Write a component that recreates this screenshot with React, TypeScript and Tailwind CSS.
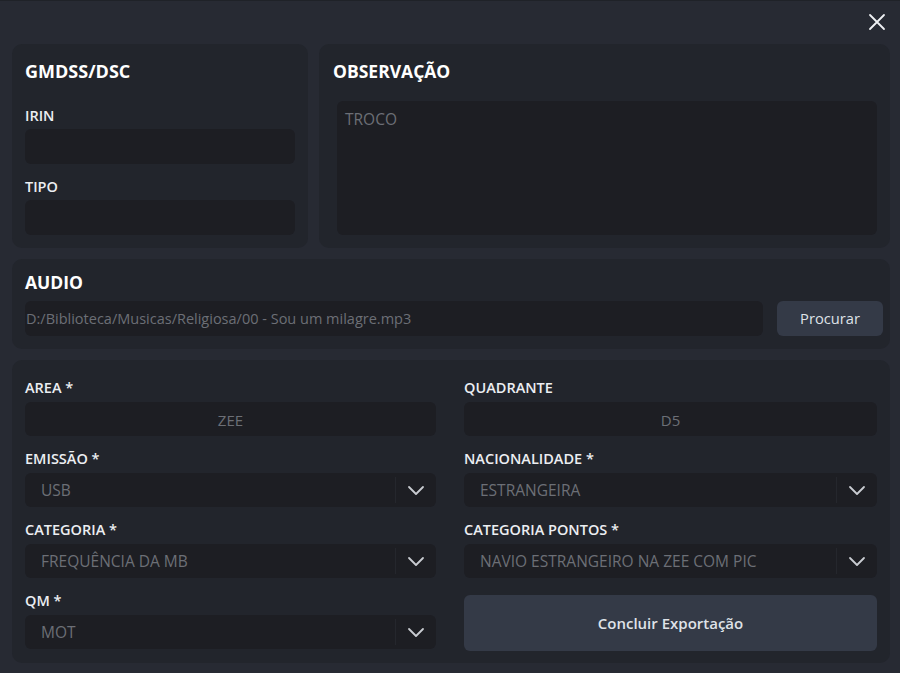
import React from "react";

const font = { fontFamily: '"Open Sans", "Noto Sans", sans-serif' };

function Chevron() {
  return (
    <svg width="20" height="20" viewBox="0 0 20 20" fill="none">
      <path d="M3 7 L10 14 L17 7" stroke="#c9ccd2" strokeWidth="1.8" strokeLinecap="round" strokeLinejoin="round" />
    </svg>
  );
}

function Label({ children }: { children: React.ReactNode }) {
  return <div className="h-5 text-[14.5px] leading-5 font-semibold text-[#eceef2]">{children}</div>;
}

function Select({ value }: { value: string }) {
  return (
    <div className="mt-1 h-[34px] rounded-md bg-[#1d1e23] flex items-center">
      <div className="flex-1 pl-4 pt-[2px] text-[15.5px] text-[#6c6f76] truncate">{value}</div>
      <div className="w-px h-[26px] bg-[#25272d]" />
      <div className="w-10 flex items-center justify-center"><Chevron /></div>
    </div>
  );
}

export default function App() {
  return (
    <div style={font} className="w-[900px] h-[673px] bg-[#272a33] relative overflow-hidden border-t border-[#1f2228]">
      <button className="absolute right-[14px] top-[12px] w-[18px] h-[18px]">
        <svg width="18" height="18" viewBox="0 0 18 18">
          <path d="M2 2 L16 16 M16 2 L2 16" stroke="#eef0f3" strokeWidth="1.8" strokeLinecap="round" />
        </svg>
      </button>
      <div className="pl-3 pr-[10px] pt-[43px] flex flex-col gap-[11px]">
        <div className="flex gap-[11px] h-[204px]">
          <div className="w-[296px] rounded-[10px] bg-[#22252c] px-[13px] pt-[15px]">
            <div className="text-[18px] leading-6 font-bold text-white">GMDSS/DSC</div>
            <div className="mt-[23px]"><Label>IRIN</Label></div>
            <div className="mt-[3px] h-[35px] rounded-md bg-[#1d1e23]" />
            <div className="mt-[13px]"><Label>TIPO</Label></div>
            <div className="mt-[3px] h-[35px] rounded-md bg-[#1d1e23]" />
          </div>
          <div className="flex-1 rounded-[10px] bg-[#22252c] pl-[14px] pr-[13px] pt-[15px]">
            <div className="text-[17.5px] leading-6 font-bold text-white">OBSERVAÇÃO</div>
            <div className="mt-[18px] ml-1 h-[134px] rounded-md bg-[#1d1e23] px-2 pt-[7px] text-[15.5px] text-[#6c6f76]">TROCO</div>
          </div>
        </div>
        <div className="h-[90px] rounded-[10px] bg-[#22252c] pl-[13px] pr-[7px] pt-[11px]">
          <div className="text-[17.5px] leading-6 font-bold text-white">AUDIO</div>
          <div className="mt-[7px] flex gap-[14px]">
            <div className="flex-1 h-[35px] rounded-md bg-[#1d1e23] flex items-center px-[1px] text-[14.5px] text-[#6c6f76]">
              D:/Biblioteca/Musicas/Religiosa/00 - Sou um milagre.mp3
            </div>
            <div className="w-[106px] h-[35px] rounded-md bg-[#343a47] flex items-center justify-center text-[14.7px] text-[#dfe2e8]">Procurar</div>
          </div>
        </div>
        <div className="h-[303px] rounded-[10px] bg-[#22252c] px-[13px] pt-[18px] grid grid-cols-[411px_413px] gap-x-[28px] content-start">
          <div className="flex flex-col">
            <Label>AREA *</Label>
            <div className="mt-1 h-[34px] rounded-md bg-[#1d1e23] flex items-center justify-center pt-[2px] text-[15px] text-[#6c6f76]">ZEE</div>
            <div className="mt-[13px]"><Label>EMISSÃO *</Label></div>
            <Select value="USB" />
            <div className="mt-[13px]"><Label>CATEGORIA *</Label></div>
            <Select value="FREQUÊNCIA DA MB" />
            <div className="mt-[13px]"><Label>QM *</Label></div>
            <Select value="MOT" />
          </div>
          <div className="flex flex-col">
            <Label>QUADRANTE</Label>
            <div className="mt-1 h-[34px] rounded-md bg-[#1d1e23] flex items-center justify-center pt-[2px] text-[15px] text-[#6c6f76]">D5</div>
            <div className="mt-[13px]"><Label>NACIONALIDADE *</Label></div>
            <Select value="ESTRANGEIRA" />
            <div className="mt-[13px]"><Label>CATEGORIA PONTOS *</Label></div>
            <Select value="NAVIO ESTRANGEIRO NA ZEE COM PIC" />
            <div className="mt-[17px] h-[56px] rounded-md bg-[#343a47] flex items-center justify-center text-[15px] font-semibold text-[#dfe2e8]">Concluir Exportação</div>
          </div>
        </div>
      </div>
    </div>
  );
}
